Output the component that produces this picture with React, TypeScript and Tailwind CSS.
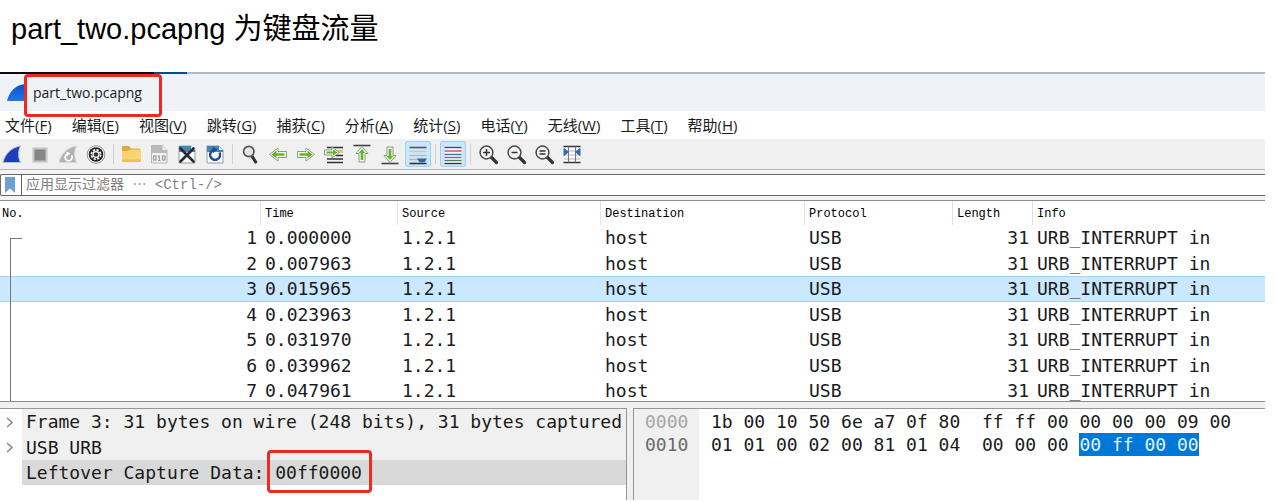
import React from "react";

const MENUS: [string, string][] = [
  ["文件", "F"],
  ["编辑", "E"],
  ["视图", "V"],
  ["跳转", "G"],
  ["捕获", "C"],
  ["分析", "A"],
  ["统计", "S"],
  ["电话", "Y"],
  ["无线", "W"],
  ["工具", "T"],
  ["帮助", "H"],
];

const TIMES = ["0.000000", "0.007963", "0.015965", "0.023963", "0.031970", "0.039962", "0.047961"];

const GREEN_RIGHT = "M3.5 9.500h8.500V6l8.500 6.500-8.500 6.500V15.500H3.500z";
const GREEN_RIGHT_CORE = "M5.500 11.200h8v-2.500l5 3.800-5 3.800v-2.500h-8z";

function Magnifier({ children }: { children?: React.ReactNode }) {
  return (
    <>
      <path d="M14.500 14.500l6 6" stroke="#333" strokeWidth="3.200" strokeLinecap="round" />
      <circle cx="10.500" cy="10.500" r="6.400" fill="#f4f4f4" stroke="#4a4a4a" strokeWidth="1.500" />
      {children}
    </>
  );
}

function Page({ top }: { top: string }) {
  return (
    <>
      <path d="M4 4h12l4 4v13H4z" fill="#fafafa" stroke="#9a9a9a" />
      <path d="M4 4h12l4 4v2H4z" fill={top} />
      <path d="M16 4v4h4z" fill="#e6eef4" />
    </>
  );
}

const ICONS: Record<string, React.ReactNode> = {
  start: (
    <path d="M3 20.500C5 12 11 5.500 20.500 4c-2.600 5-2.600 11 0 16.500z" fill="#1c3fc0" stroke="#b9bcc4" />
  ),
  stop: <rect x="5.500" y="6.500" width="13" height="13" fill="#858585" stroke="#c4c4c4" strokeWidth="2" />,
  restart: (
    <>
      <path d="M3 20.500C5 12 11 5.500 20.500 4c-2.600 5-2.600 11 0 16.500z" fill="#b3b3b3" stroke="#d5d5d5" />
      <path d="M15.600 13.500a3.500 3.500 0 1 1-4-1.500" fill="none" stroke="#fff" strokeWidth="1.800" />
      <path d="M10.500 9.500l4 2-3.500 2.600z" fill="#fff" />
    </>
  ),
  options: (
    <>
      <circle cx="12" cy="12.500" r="8.800" fill="#fff" stroke="#8f8f8f" />
      <circle cx="12" cy="12.500" r="7.300" fill="#222" />
      <circle cx="12" cy="12.500" r="4.600" fill="none" stroke="#fff" strokeWidth="1.800" strokeDasharray="2.300 1.300" />
      <circle cx="12" cy="12.500" r="3.400" fill="#fff" />
      <circle cx="12" cy="12.500" r="2.200" fill="#333" />
    </>
  ),
  open: (
    <>
      <path d="M3 5q0-1 1-1h6l2 2.500h8q1.500 0 1.500 1.500v5H3z" fill="#dfa83c" />
      <path d="M3 9h6l2-1.500h9.500q1.500 0 1.500 1.500v9.500q0 1.500-1.500 1.500h-16Q3 20 3 18.500z" fill="#f9d473" />
      <path d="M3 17.500v1Q3 20 4.500 20h16q1.500 0 1.500-1.500v-1z" fill="#f0c04f" />
    </>
  ),
  save: (
    <>
      <path d="M4.500 3.500h11l4.500 4.500v13h-15.500z" fill="#f2f2f2" stroke="#b5b5b5" />
      <path d="M4.500 3.500h11l4.500 4.500v3h-15.500z" fill="#b9b9b9" />
      <path d="M15.500 3.500V8H20z" fill="#efefef" />
      <g fill="none" stroke="#9a9a9a" strokeWidth="1.200">
        <rect x="6.500" y="14" width="2.500" height="4" />
        <path d="M12.200 13.500v5M11 14.500l1.200-1M11 18.500h2.600" />
        <rect x="15.500" y="14" width="2.500" height="4" />
      </g>
    </>
  ),
  close: (
    <>
      <Page top="#3f87b8" />
      <path d="M5.500 6.500l13 13M18.500 6.500l-13 13" stroke="#222c33" strokeWidth="2.600" strokeLinecap="round" />
    </>
  ),
  reload: (
    <>
      <Page top="#3f87b8" />
      <path d="M16.500 10.500a5 5 0 1 1-5.500-2.500" fill="none" stroke="#1c4d96" strokeWidth="2.400" />
      <path d="M9.500 4.500l5 3-4.500 3.800z" fill="#1c4d96" />
    </>
  ),
  find: (
    <>
      <path d="M13.500 13.500l4.200 6.500" stroke="#333" strokeWidth="3.200" strokeLinecap="round" />
      <circle cx="10.800" cy="9.500" r="5.200" fill="#e4e4e4" stroke="#555" strokeWidth="1.700" />
      <path d="M8 9a3 3 0 0 1 2.500-2.500" stroke="#fff" strokeWidth="1.300" fill="none" />
    </>
  ),
  back: (
    <g transform="translate(24 0) scale(-1 1)">
      <path d={GREEN_RIGHT} fill="#f7faf4" stroke="#8d9a85" strokeLinejoin="round" />
      <path d={GREEN_RIGHT_CORE} fill="#62b51d" />
    </g>
  ),
  forward: (
    <>
      <path d={GREEN_RIGHT} fill="#f7faf4" stroke="#8d9a85" strokeLinejoin="round" />
      <path d={GREEN_RIGHT_CORE} fill="#62b51d" />
    </>
  ),
  goto: (
    <>
      <path d="M5 5.500h16M5 17h16M5 20.500h16" stroke="#333" strokeWidth="1.600" />
      <path d="M14 9.500h7" stroke="#f2c84b" strokeWidth="3" />
      <path d="M14 13.500h7" stroke="#333" strokeWidth="1.600" />
      <path d="M2.500 8H10V5l7.500 5.500L10 16v-3H2.500z" fill="#f7faf4" stroke="#8d9a85" strokeLinejoin="round" />
      <path d="M4.500 9.500H11v-2l4.500 3-4.500 3v-2H4.500z" fill="#62b51d" />
    </>
  ),
  first: (
    <>
      <path d="M3.500 3.500h17" stroke="#444" strokeWidth="1.600" />
      <path d="M12 4.500l6 7h-3V20H9v-8.500H6z" fill="#f7faf4" stroke="#8d9a85" strokeLinejoin="round" />
      <path d="M12 7l3.200 4h-1.900v7h-2.600v-7H8.800z" fill="#62b51d" />
    </>
  ),
  last: (
    <>
      <path d="M3.500 21.500h17" stroke="#444" strokeWidth="1.600" />
      <path d="M12 20.500l6-7h-3V5H9v8.500H6z" fill="#f7faf4" stroke="#8d9a85" strokeLinejoin="round" />
      <path d="M12 18l3.200-4h-1.900V7h-2.600v7H8.800z" fill="#62b51d" />
    </>
  ),
  autoscroll: (
    <>
      <path d="M3.500 5.500h17" stroke="#46586c" strokeWidth="1.600" />
      <path d="M3.500 9.500h17" stroke="#d9c8a8" strokeWidth="1.400" />
      <path d="M3.500 13.500h17" stroke="#a9bccb" strokeWidth="1.400" />
      <path d="M3.500 17.500h9" stroke="#c8b68a" strokeWidth="1.400" />
      <path d="M3.500 21.500h17" stroke="#333" strokeWidth="1.600" />
      <path d="M11 16.500h10l-2.500 3.800h-5z" fill="#2b67a5" />
    </>
  ),
  colorize: (
    <>
      <rect x="3.500" y="5" width="17" height="17" fill="#f3f6fa" />
      <g strokeWidth="1.300">
        <path d="M3.500 5.500h17" stroke="#3e4d5c" />
        <path d="M3.500 9h17" stroke="#d93a3a" />
        <path d="M3.500 12.500h17" stroke="#3b6bab" />
        <path d="M3.500 15.500h17" stroke="#8a5ca5" />
        <path d="M3.500 18.500h17" stroke="#4d7d62" />
        <path d="M3.500 21.500h17" stroke="#333" />
      </g>
    </>
  ),
  zoomin: (
    <Magnifier>
      <path d="M7 10.500h7M10.500 7v7" stroke="#333" strokeWidth="1.500" />
    </Magnifier>
  ),
  zoomout: (
    <Magnifier>
      <path d="M7.500 10.500h6" stroke="#333" strokeWidth="1.500" />
    </Magnifier>
  ),
  zoomreset: (
    <Magnifier>
      <path d="M7.500 9h6M7.500 12h6" stroke="#333" strokeWidth="1.400" />
    </Magnifier>
  ),
  resize: (
    <>
      <rect x="4" y="5" width="16" height="15" fill="#fdfdfd" />
      <path d="M3.500 4.500h17M3.500 20.500h17" stroke="#333" strokeWidth="1.500" />
      <path d="M4 9h16M4 13h16M4 17h16" stroke="#b5b5b5" />
      <path d="M8.500 4.500v16M15.500 4.500v16" stroke="#777" />
      <path d="M4 6.500l4.500 3.500-4.500 3.500zM20 6.500l-4.500 3.500 4.500 3.500z" fill="#2f6cb3" stroke="#2f6cb3" />
    </>
  ),
};

type Tool = { icon: string; label: string; on?: boolean } | null;

const TOOLS: Tool[] = [
  { icon: "start", label: "开始捕获" },
  { icon: "stop", label: "停止捕获" },
  { icon: "restart", label: "重新开始捕获" },
  { icon: "options", label: "捕获选项" },
  null,
  { icon: "open", label: "打开" },
  { icon: "save", label: "保存" },
  { icon: "close", label: "关闭" },
  { icon: "reload", label: "重新加载" },
  null,
  { icon: "find", label: "查找" },
  { icon: "back", label: "后退" },
  { icon: "forward", label: "前进" },
  { icon: "goto", label: "转到分组" },
  { icon: "first", label: "首个分组" },
  { icon: "last", label: "最新分组" },
  { icon: "autoscroll", label: "自动滚动", on: true },
  null,
  { icon: "colorize", label: "着色", on: true },
  null,
  { icon: "zoomin", label: "放大" },
  { icon: "zoomout", label: "缩小" },
  { icon: "zoomreset", label: "普通大小" },
  { icon: "resize", label: "调整列宽" },
];

function Toolbar() {
  return (
    <div className="flex items-center gap-1 border-b border-[#b8b8b8] bg-[#f0f0f0] py-[3px]">
      {TOOLS.map((t, i) =>
        t ? (
          <button
            key={i}
            type="button"
            aria-label={t.label}
            className={
              t.on
                ? "h-6 w-6 shrink-0 rounded-xs bg-[#cce6fb] shadow-[0_0_0_1px_#9fd0f5]"
                : "h-6 w-6 shrink-0"
            }
          >
            <svg viewBox="0 0 24 24" className="block h-6 w-6" fill="none">
              {ICONS[t.icon]}
            </svg>
          </button>
        ) : (
          <span key={i} className="mx-px h-5 w-px shrink-0 bg-[#d2d2d2]" />
        )
      )}
    </div>
  );
}

function PacketList() {
  const th = "border-l border-[#e2e2e2] pt-0.5 pl-1 text-left font-normal";
  return (
    <div className="relative h-[202px] overflow-hidden border-y border-[#8c8c8c] bg-white">
      <table className="w-full table-fixed border-separate border-spacing-0 font-['DejaVu_Sans_Mono',monospace] text-lg leading-6 whitespace-nowrap text-[#1a1a22]">
        <colgroup>
          <col className="w-[260px]" />
          <col className="w-[137px]" />
          <col className="w-[203px]" />
          <col className="w-[204px]" />
          <col className="w-[148px]" />
          <col className="w-[80px]" />
          <col />
        </colgroup>
        <thead>
          <tr className="h-6 font-['Liberation_Mono',monospace] text-xs text-black">
            <th className="pt-0.5 pl-0.5 text-left font-normal">No.</th>
            <th className={th}>Time</th>
            <th className={th}>Source</th>
            <th className={th}>Destination</th>
            <th className={th}>Protocol</th>
            <th className={th}>Length</th>
            <th className={th}>Info</th>
          </tr>
        </thead>
        <tbody>
          {TIMES.map((time, i) => {
            const td = i === 2 ? "border-y border-[#a5d3f5] bg-[#cce8ff] leading-5" : "leading-5";
            return (
              <tr key={time} className="odd:h-[26px] even:h-[25px]">
                <td className={td + " pr-[3px] text-right"}>{i + 1}</td>
                <td className={td + " pl-[5px]"}>{time}</td>
                <td className={td + " pl-[5px]"}>1.2.1</td>
                <td className={td + " pl-[5px]"}>host</td>
                <td className={td + " pl-[5px]"}>USB</td>
                <td className={td + " pr-[3px] text-right"}>31</td>
                <td className={td + " pl-[5px]"}>URB_INTERRUPT in</td>
              </tr>
            );
          })}
        </tbody>
      </table>
      <span className="absolute top-[37px] bottom-0 left-2.5 w-3 border-t border-l border-[#777]" />
    </div>
  );
}

function Chevron() {
  return (
    <svg viewBox="0 0 22 24" className="h-6 w-[22px] shrink-0" fill="none" stroke="#8a8a8a" strokeWidth="1.600">
      <path d="M7 8l5 4.500-5 4.500" />
    </svg>
  );
}

function Details() {
  return (
    <div className="w-[627px] shrink-0 overflow-hidden border-t border-r border-[#969696] bg-white whitespace-pre">
      <div className="flex h-[25px] items-center">
        <Chevron />
        <div className="h-full grow bg-[#f0f0f0] pl-1 leading-[26px]">
          Frame 3: 31 bytes on wire (248 bits), 31 bytes captured
        </div>
      </div>
      <div className="flex h-[26px] items-center">
        <Chevron />
        <div className="h-full grow bg-[#f0f0f0] pl-1 leading-7">USB URB</div>
      </div>
      <div className="ml-[22px] h-[25px] bg-[#d9d9d9] pl-1 leading-[26px]">
        Leftover Capture Data:{" "}
        <span className="relative">
          00ff0000
          <span className="absolute -top-3 -right-2.5 -bottom-2.5 -left-2 rounded-sm border-3 border-[#f0281e]" />
        </span>
      </div>
    </div>
  );
}

function HexView() {
  return (
    <div className="flex grow border-t border-l border-[#969696] bg-white leading-[23px] whitespace-pre">
      <div className="w-[65px] shrink-0 bg-[#f0f0f0] pt-px pl-[11px]">
        <div className="text-[#a6a6a6]">0000</div>
        <div className="text-[#6a6a6a]">0010</div>
      </div>
      <div className="pt-px pl-3">
        <div>1b 00 10 50 6e a7 0f 80  ff ff 00 00 00 00 09 00</div>
        <div>
          01 01 00 02 00 81 01 04  00 00 00{" "}
          <span className="inline-block bg-[#0078d7] text-[#e4f2ff]">00 ff 00 00</span>
        </div>
      </div>
    </div>
  );
}

export default function App() {
  return (
    <main className="min-h-screen bg-white pr-4 text-black">
      <h1 className="h-[72px] pt-2 pl-[11px] font-['Liberation_Sans','Noto_Sans_CJK_SC',sans-serif] text-[29px] leading-[42px]">
        part_two.pcapng 为键盘流量
      </h1>
      <section className="bg-[#f0f0f0]">
        <div className="flex h-0.5 bg-[#b4b8be]">
          <span className="w-[154px] bg-[#0d0b10]" />
          <span className="w-[33px] bg-[#0b4a8c]" />
        </div>
        <header className="relative flex h-[37px] items-center bg-[#eff3f8] pl-[7px] font-['Open_Sans',sans-serif] text-sm text-[#1c1c1c]">
          <svg viewBox="0 0 18 18" className="mr-2 h-[18px] w-[18px]">
            <defs>
              <linearGradient id="fin" x1="0" y1="0" x2="0" y2="1">
                <stop offset="0" stopColor="#0d4fd0" />
                <stop offset="1" stopColor="#1f7ae0" />
              </linearGradient>
            </defs>
            <path d="M0 17C2 8 8 1 18 0v17z" fill="url(#fin)" />
          </svg>
          <span>part_two.pcapng</span>
          <span className="absolute top-0 left-6 h-[43px] w-[138px] rounded-sm border-3 border-[#f0281e]" />
        </header>
        <nav className="flex h-7 items-center gap-5 bg-white pl-[5px] font-['Open_Sans','Noto_Sans_CJK_SC',sans-serif] text-[15px] leading-7 text-[#1a1a1a]">
          {MENUS.map(([name, key]) => (
            <button key={key} type="button" className="whitespace-nowrap">
              {name}(<u className="underline-offset-2">{key}</u>)
            </button>
          ))}
        </nav>
        <Toolbar />
        <div className="bg-[#f4f4f4] py-1">
          <div className="flex h-[22px] items-stretch rounded-l-xs border-y border-l border-[#686868] bg-white">
            <button type="button" aria-label="书签" className="w-[21px] shrink-0 border-r border-[#686868]">
              <svg viewBox="0 0 20 20" className="block h-5 w-5">
                <path d="M4 2h10v16l-5-4.500L4 18z" fill="#6c9fd4" />
              </svg>
            </button>
            <input
              type="text"
              aria-label="应用显示过滤器"
              placeholder="应用显示过滤器 ⋯ <Ctrl-/>"
              className="min-w-0 grow pl-1 font-['Liberation_Mono','Noto_Sans_CJK_SC',monospace] text-sm leading-5 outline-none placeholder:text-[#808080]"
            />
          </div>
        </div>
        <PacketList />
        <div className="flex h-[98px] gap-1.5 pt-1.5 font-['DejaVu_Sans_Mono',monospace] text-lg text-[#1a1a1a]">
          <Details />
          <HexView />
        </div>
      </section>
    </main>
  );
}
